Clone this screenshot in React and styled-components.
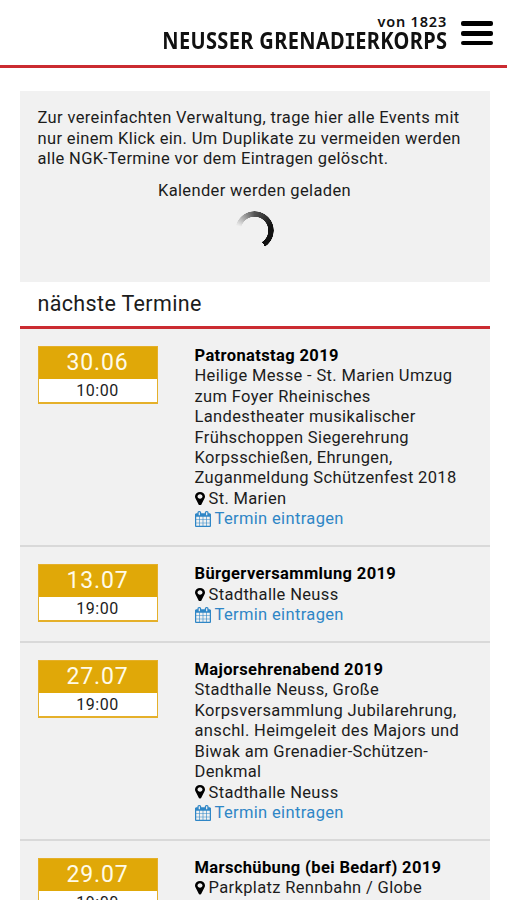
import React, { Component } from 'react'
import styled, { createGlobalStyle } from 'styled-components';

const events = [
    {
        date: '30.06',
        time: '10:00',
        title: 'Patronatstag 2019',
        text: 'Heilige Messe - St. Marien Umzug zum Foyer Rheinisches Landestheater musikalischer Frühschoppen Siegerehrung Korpsschießen, Ehrungen, Zuganmeldung Schützenfest 2018',
        place: 'St. Marien',
    },
    {
        date: '13.07',
        time: '19:00',
        title: 'Bürgerversammlung 2019',
        place: 'Stadthalle Neuss',
    },
    {
        date: '27.07',
        time: '19:00',
        title: 'Majorsehrenabend 2019',
        text: 'Stadthalle Neuss, Große Korpsversammlung Jubilarehrung, anschl. Heimgeleit des Majors und Biwak am Grenadier-Schützen-Denkmal',
        place: 'Stadthalle Neuss',
    },
    {
        date: '29.07',
        time: '19:00',
        title: 'Marschübung (bei Bedarf) 2019',
        place: 'Parkplatz Rennbahn / Globe',
    },
];

const MarkerIcon = () => (
    <Icon viewBox="384 128 1024 1536" preserveAspectRatio="none" $width={10} $height={13.5}>
        <path d="M1152 640q0-106-75-181t-181-75-181 75-75 181 75 181 181 75 181-75 75-181zm256 0q0 109-33 179l-364 774q-16 33-47.5 52t-67.5 19-67.5-19-46.5-52l-365-774q-33-70-33-179 0-212 150-362t362-150 362 150 150 362z" />
    </Icon>
)

const CalendarIcon = () => (
    <Icon viewBox="64 0 1664 1792" preserveAspectRatio="none" $width={16} $height={16}>
        <path d="M192 1664h288v-288h-288v288zm352 0h320v-288h-320v288zm-352-352h288v-320h-288v320zm352 0h320v-320h-320v320zm-352-384h288v-288h-288v288zm736 736h320v-288h-320v288zm-384-736h320v-288h-320v288zm768 736h288v-288h-288v288zm-384-352h320v-320h-320v320zm-352-864v-288q0-13-9.5-22.5t-22.5-9.5h-64q-13 0-22.5 9.5t-9.5 22.5v288q0 13 9.5 22.5t22.5 9.5h64q13 0 22.5-9.5t9.5-22.5zm736 864h288v-320h-288v320zm-384-384h320v-288h-320v288zm384 0h288v-288h-288v288zm32-480v-288q0-13-9.5-22.5t-22.5-9.5h-64q-13 0-22.5 9.5t-9.5 22.5v288q0 13 9.5 22.5t22.5 9.5h64q13 0 22.5-9.5t9.5-22.5zm384-64v1280q0 52-38 90t-90 38h-1408q-52 0-90-38t-38-90v-1280q0-52 38-90t90-38h128v-96q0-66 47-113t113-47h64q66 0 113 47t47 113v96h384v-96q0-66 47-113t113-47h64q66 0 113 47t47 113v96h128q52 0 90 38t38 90z" />
    </Icon>
)

export default class App extends Component {

    renderEvent = (event) => (
        <Event key={event.date}>
            <DateBox>
                <Day>{event.date}</Day>
                <Time>{event.time}</Time>
            </DateBox>
            <Details>
                <Title>{event.title}</Title>
                {event.text && <p>{event.text}</p>}
                <Line><MarkerIcon />{event.place}</Line>
                <EntryLink href="#"><CalendarIcon />Termin eintragen</EntryLink>
            </Details>
        </Event>
    )

    render() {
        return (
            <Page>
                <GlobalStyle />
                <Header>
                    <Logo>
                        <Since>von 1823</Since>
                        <Name>NEUSSER GRENAD<Slab>I</Slab>ERKORPS</Name>
                    </Logo>
                    <MenuButton aria-label="Menü">
                        <Bar />
                        <Bar />
                        <Bar />
                    </MenuButton>
                </Header>
                <Content>
                    <Intro>
                        <p>Zur vereinfachten Verwaltung, trage hier alle Events mit nur einem Klick ein. Um Duplikate zu vermeiden werden alle NGK-Termine vor dem Eintragen gelöscht.</p>
                        <Loading>Kalender werden geladen</Loading>
                        <Spinner />
                    </Intro>
                    <Heading>nächste Termine</Heading>
                    {events.map(this.renderEvent)}
                </Content>
            </Page>
        )
    }
}

const GlobalStyle = createGlobalStyle`
    * {
        box-sizing: border-box;
    }

    body, p, h2, h3 {
        margin: 0;
    }
`;

const Page = styled.div`
    height: 900px;
    overflow: hidden;
    background: #fff;
    color: #1c1c1c;
    font-family: Roboto, sans-serif;
    font-size: 16.5px;
    line-height: 20.4px;
    letter-spacing: 0.35px;
`;

const Header = styled.header`
    display: flex;
    justify-content: flex-end;
    height: 68px;
    padding: 13px 14px 0 0;
    border-bottom: 3px solid #cb2b31;
`;

const Logo = styled.div`
    display: flex;
    flex-direction: column;
    align-items: flex-end;
    margin-right: 14px;
    color: #111;
    font-family: "Noto Sans", sans-serif;
    font-weight: 700;
    white-space: nowrap;
`;

const Since = styled.span`
    font-size: 14.5px;
    font-weight: 600;
    line-height: 16px;
    letter-spacing: 0.8px;
`;

const Name = styled.span`
    font-size: 22.5px;
    font-weight: 700;
    line-height: 23px;
    letter-spacing: 0.4px;
    transform: scaleX(0.89);
    transform-origin: right;
`;

const Slab = styled.span`
    font-family: "DejaVu Sans Mono", monospace;
    font-size: 21.5px;
    line-height: 1;
    margin: 0 -1px;
`;

const MenuButton = styled.button`
    display: flex;
    flex-direction: column;
    gap: 5px;
    width: 32px;
    margin-top: 8px;
    padding: 0;
    border: 0;
    background: none;
`;

const Bar = styled.span`
    height: 4.8px;
    border-radius: 2px;
    background: #000;
`;

const Content = styled.main`
    width: 470px;
    margin: 22.5px 0 0 19.5px;
`;

const Intro = styled.section`
    height: 191px;
    padding: 17.8px 18px 0;
    background: #f1f1f1;
`;

const Loading = styled.p`
    margin-top: 11px;
    text-align: center;
`;

const Spinner = styled.div`
    width: 39px;
    height: 39px;
    margin: 9.7px auto 0;
    border-radius: 50%;
    background: conic-gradient(from -75deg, transparent, #555 75deg, #111 150deg, #111 222deg, transparent 222deg);
    mask: radial-gradient(circle, transparent 13.5px, #000 14px, #000 19px, transparent 19.5px);
`;

const Heading = styled.h2`
    height: 47.5px;
    padding-left: 18px;
    border-bottom: 3px solid #cb2b31;
    font-size: 21.5px;
    font-weight: 400;
    line-height: 43.5px;
`;

const Event = styled.article`
    display: flex;
    align-items: flex-start;
    padding: 16.5px 18px 15.8px;
    border-bottom: 2px solid #d9d9d9;
    background: #f1f1f1;
`;

const DateBox = styled.div`
    flex: 0 0 120px;
    height: 58.5px;
    margin-right: 37px;
    border: 1.5px solid #e5b02a;
    border-bottom-width: 2px;
    background: #fff;
    text-align: center;
`;

const Day = styled.div`
    height: 32px;
    background: #e0a808;
    color: #fffbe8;
    font-size: 23px;
    line-height: 32px;
    letter-spacing: 0.8px;
`;

const Time = styled.div`
    font-size: 16px;
    line-height: 24px;
    letter-spacing: 0.5px;
`;

const Details = styled.div`
    flex: 1;
    padding-top: 0.4px;
`;

const Title = styled.h3`
    color: #000;
    font-size: 16.5px;
    font-weight: 700;
    letter-spacing: 0.37px;
`;

const Line = styled.div`
    display: flex;
    align-items: center;
    gap: 4px;
    height: 20.4px;
`;

const EntryLink = styled.a`
    display: flex;
    align-items: center;
    gap: 4px;
    height: 20.4px;
    color: #2f86c6;
    text-decoration: none;
`;

const Icon = styled.svg`
    width: ${props => props.$width}px;
    height: ${props => props.$height}px;
    margin-bottom: 1px;
    fill: ${props => props.$width > 12 ? 'currentColor' : '#000'};
`;
